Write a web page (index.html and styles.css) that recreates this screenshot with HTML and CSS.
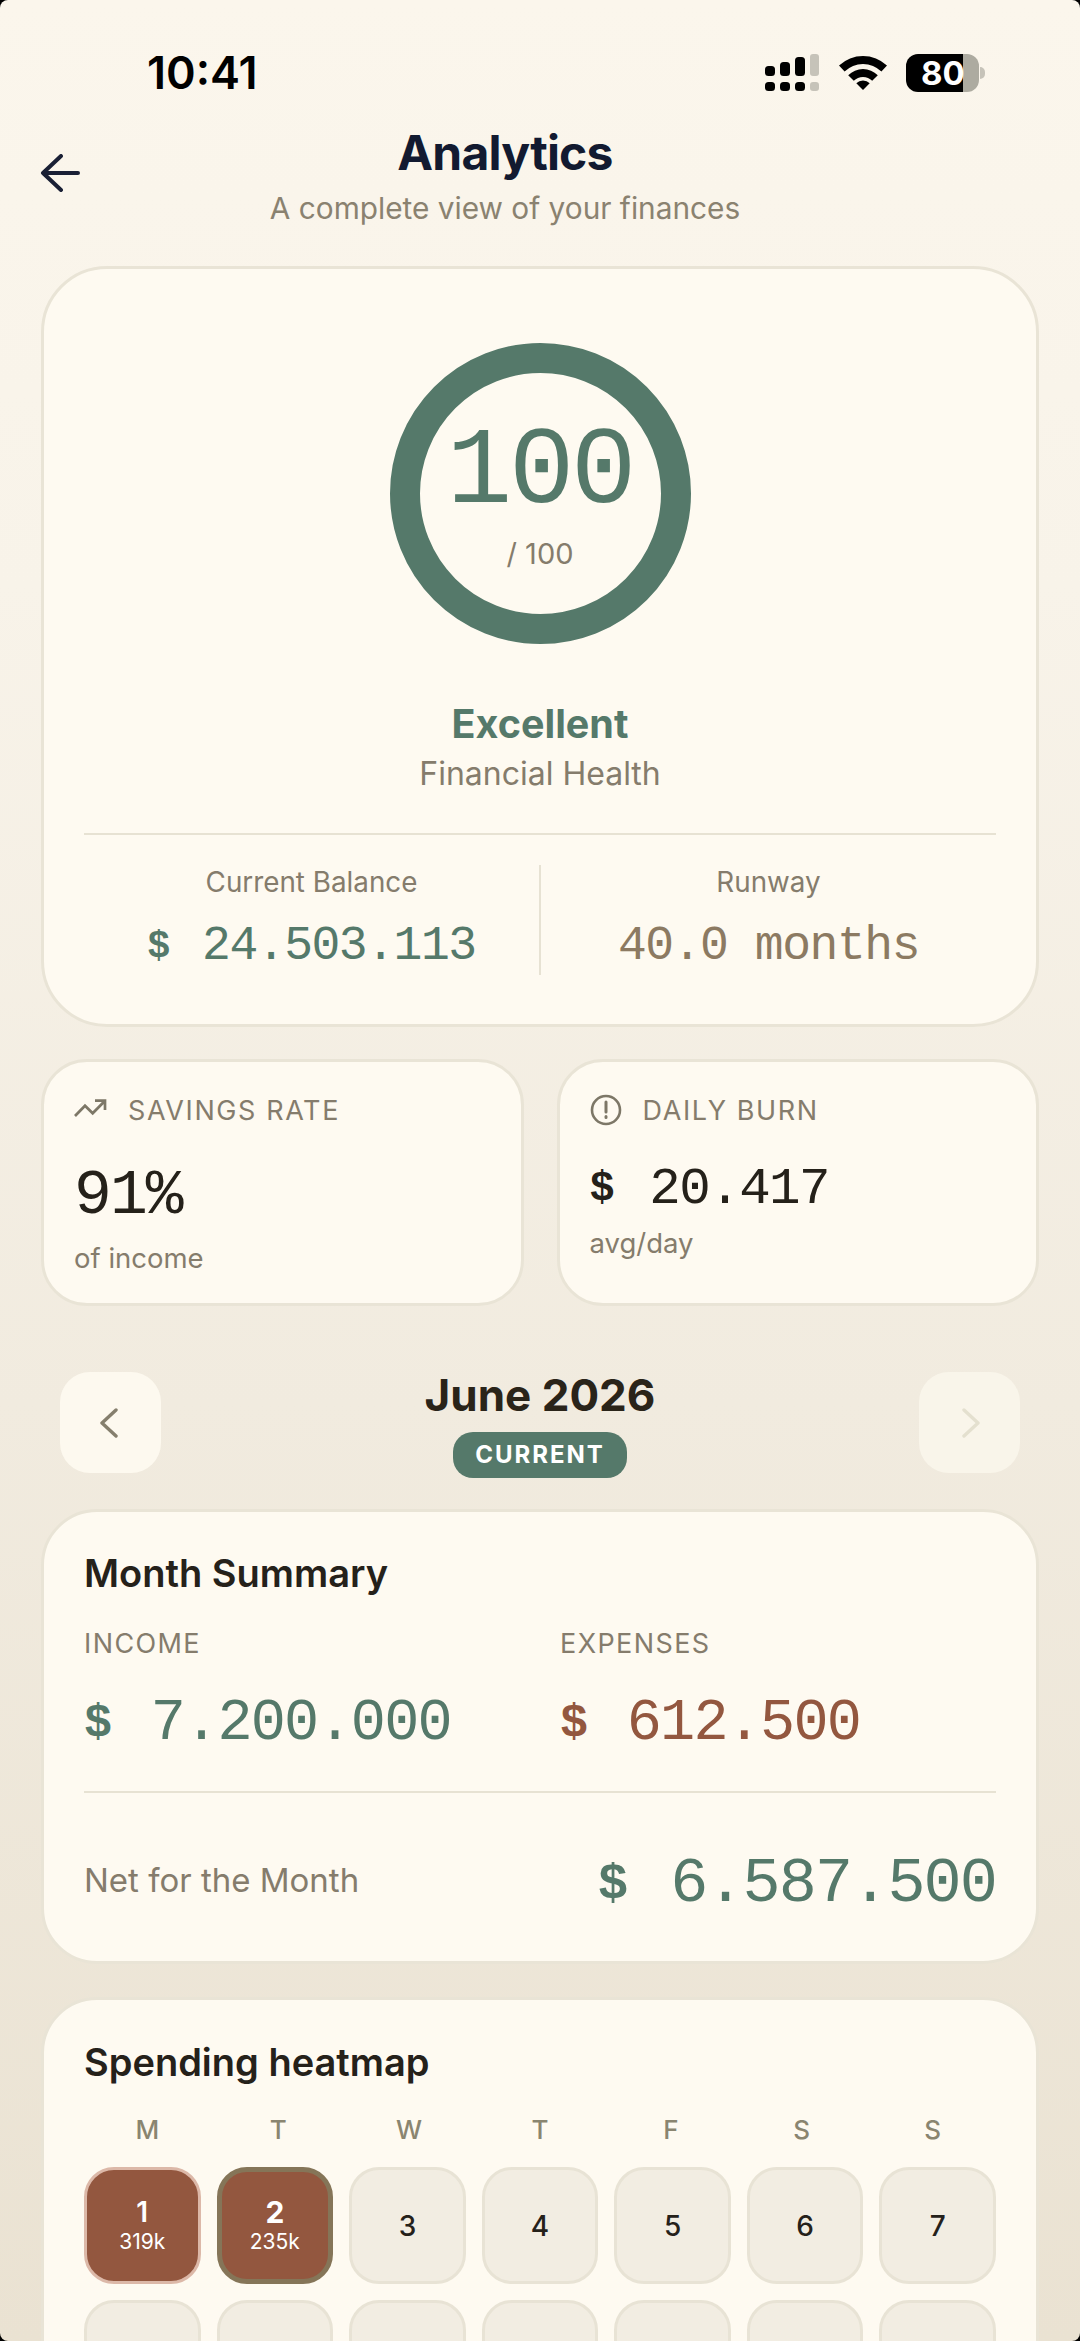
FILE: index.html
```html
<!DOCTYPE html>
<html lang="en">
<head>
    <meta charset="UTF-8">
    <meta name="viewport" content="width=device-width, initial-scale=1.0">
    <link rel="stylesheet" href="styles.css">
    <title>Analytics</title>
</head>
<body>
    <div class="screen">
        <div class="status-bar">
            <span class="time">10:41</span>
            <div class="status-icons">
                <svg class="signal" width="54" height="37" viewBox="0 0 54 37">
                    <g fill="#000">
                        <rect x="0" y="12" width="10" height="10" rx="3.5"/>
                        <rect x="0" y="28" width="10" height="9" rx="3.5"/>
                        <rect x="15" y="8" width="10" height="14" rx="3.5"/>
                        <rect x="15" y="28" width="10" height="9" rx="3.5"/>
                        <rect x="30" y="3" width="10" height="19" rx="3.5"/>
                        <rect x="30" y="28" width="10" height="9" rx="3.5"/>
                    </g>
                    <g fill="#c6c3b9">
                        <rect x="45" y="0" width="9" height="22" rx="3"/>
                        <rect x="45" y="28" width="9" height="9" rx="3"/>
                    </g>
                </svg>
                <svg class="wifi" width="48" height="35" viewBox="0 0 48 35">
                    <path d="M0 10.5A35 35 0 0 1 48 10.5L42.4 16.6A26 26 0 0 0 5.6 16.6Z"/>
                    <path d="M9.2 20.2A21 21 0 0 1 38.8 20.2L33.2 25.8A13 13 0 0 0 14.8 25.8Z"/>
                    <path d="M17.3 28.3A9.5 9.5 0 0 1 30.7 28.3L24 35Z"/>
                </svg>
                <div class="battery">
                    <div class="battery-body"><span class="battery-level">80</span></div>
                    <div class="battery-nub"></div>
                </div>
            </div>
        </div>

        <div class="header">
            <svg class="back" width="40" height="38" viewBox="0 0 40 38">
                <path d="M38 19H3M21 2L3 19l18 17" fill="none" stroke="#1a2035" stroke-width="4" stroke-linecap="round" stroke-linejoin="round"/>
            </svg>
            <div class="header-text">
                <h1>Analytics</h1>
                <p>A complete view of your finances</p>
            </div>
        </div>

        <div class="card health">
            <div class="ring">
                <div class="mono ring-score">100</div>
                <div class="ring-max">/ 100</div>
            </div>
            <div class="health-title">Excellent</div>
            <div class="health-sub">Financial Health</div>
            <div class="health-stats">
                <div class="health-stat">
                    <div class="stat-label">Current Balance</div>
                    <div class="mono green"><span class="cur">$</span> 24.503.113</div>
                </div>
                <div class="health-stat">
                    <div class="stat-label">Runway</div>
                    <div class="mono tan">40.0 months</div>
                </div>
            </div>
        </div>

        <div class="tiles">
            <div class="card tile">
                <div class="tile-label">
                    <svg width="33" height="24" viewBox="0 0 33 24">
                        <path d="M1 18L11 7.7l7.7 7.6L31 2.7M21 2.7h10V12" fill="none" stroke="#7d7767" stroke-width="2.7"/>
                    </svg>
                    <span>SAVINGS RATE</span>
                </div>
                <div class="mono tile-rate">91%</div>
                <div class="tile-note">of income</div>
            </div>
            <div class="card tile">
                <div class="tile-label">
                    <svg width="32" height="32" viewBox="0 0 32 32">
                        <circle cx="16" cy="16" r="14" fill="none" stroke="#7d7767" stroke-width="2.6"/>
                        <path d="M16 8v10M16 22.5v1" fill="none" stroke="#7d7767" stroke-width="3" stroke-linecap="round"/>
                    </svg>
                    <span>DAILY BURN</span>
                </div>
                <div class="mono tile-burn"><span class="cur">$</span> 20.417</div>
                <div class="tile-note tile-note-tight">avg/day</div>
            </div>
        </div>

        <div class="month-nav">
            <div class="nav-btn">
                <svg width="18" height="30" viewBox="0 0 18 30"><path d="M16 2L2 15l14 13" fill="none" stroke="#857f6d" stroke-width="3.4" stroke-linecap="round" stroke-linejoin="round"/></svg>
            </div>
            <div class="month-center">
                <div class="month-name">June 2026</div>
                <div class="month-badge">CURRENT</div>
            </div>
            <div class="nav-btn nav-btn-off">
                <svg width="18" height="30" viewBox="0 0 18 30"><path d="M2 2l14 13L2 28" fill="none" stroke="#e4e0cf" stroke-width="3.4" stroke-linecap="round" stroke-linejoin="round"/></svg>
            </div>
        </div>

        <div class="card summary">
            <h2>Month Summary</h2>
            <div class="summary-cols">
                <div>
                    <div class="summary-label">INCOME</div>
                    <div class="mono summary-value green"><span class="cur">$</span> 7.200.000</div>
                </div>
                <div>
                    <div class="summary-label">EXPENSES</div>
                    <div class="mono summary-value red"><span class="cur">$</span> 612.500</div>
                </div>
            </div>
            <div class="summary-net">
                <span>Net for the Month</span>
                <span class="mono net-value green"><span class="cur">$</span> 6.587.500</span>
            </div>
        </div>

        <div class="card heatmap">
            <h2>Spending heatmap</h2>
            <div class="week-days">
                <span>M</span><span>T</span><span>W</span><span>T</span><span>F</span><span>S</span><span>S</span>
            </div>
            <div class="days">
                <div class="day spent"><b>1</b><small>319k</small></div>
                <div class="day spent today"><b>2</b><small>235k</small></div>
                <div class="day">3</div>
                <div class="day">4</div>
                <div class="day">5</div>
                <div class="day">6</div>
                <div class="day">7</div>
                <div class="day"></div>
                <div class="day"></div>
                <div class="day"></div>
                <div class="day"></div>
                <div class="day"></div>
                <div class="day"></div>
                <div class="day"></div>
            </div>
        </div>
    </div>
</body>
</html>
```

FILE: styles.css
```css
* {
    box-sizing: border-box;
}

html, body {
    margin: 0;
    padding: 0;
    background-color: #000000;
}

body {
    height: 2341px;
    overflow: hidden;
    font-family: 'Inter', 'Noto Sans', sans-serif;
    color: #25211a;
}

.screen {
    height: 2341px;
    overflow: hidden;
    padding: 0 41px;
    border-radius: 8px;
    background: linear-gradient(180deg, #fbf6ec 0%, #f8f3e9 25%, #f1ebdf 60%, #eae2d2 100%);
}

h1, h2, p {
    margin: 0;
}

.mono {
    font-family: 'Liberation Mono', monospace;
    white-space: pre;
    letter-spacing: -0.03em;
}

.cur {
    font-weight: 700;
    font-size: 0.8em;
    margin-right: 0.15em;
    vertical-align: 0.06em;
}

.green { color: #55796a; }
.tan { color: #8c7a62; }
.red { color: #93573f; }

/* status bar */
.status-bar {
    display: flex;
    justify-content: space-between;
    align-items: center;
    height: 39px;
    margin-top: 53px;
    padding: 0 54px 0 106px;
}

.time {
    font-size: 45px;
    font-weight: 600;
    color: #000000;
    line-height: 39px;
}

.status-icons {
    display: flex;
    align-items: center;
    gap: 20px;
}

.wifi {
    margin-right: -1px;
}

.battery {
    display: flex;
    align-items: center;
}

.battery-body {
    width: 73px;
    height: 38px;
    border-radius: 12px;
    background: linear-gradient(90deg, #000000 78%, #adaba0 78%);
    color: #ffffff;
    font-size: 33px;
    font-weight: 700;
    line-height: 38px;
    padding-left: 15px;
}

.battery-nub {
    width: 5px;
    height: 12px;
    margin-left: 1px;
    border-radius: 0 6px 6px 0;
    background-color: #c6c3b9;
}

/* header */
.header {
    display: flex;
    margin-top: 32px;
    height: 102px;
}

.back {
    flex-shrink: 0;
    margin: 30px 0 0 -1px;
}

.header-text {
    flex-grow: 1;
    text-align: center;
    padding-right: 109px;
}

.header-text h1 {
    font-size: 48px;
    font-weight: 700;
    color: #121a30;
    letter-spacing: -0.8px;
    line-height: 58px;
}

.header-text p {
    font-size: 29.8px;
    color: #8a8270;
    line-height: 36px;
    margin-top: 8px;
}

/* cards */
.card {
    background-color: #fefaf1;
    border: 3px solid #e9e4d6;
}

.health {
    margin-top: 40px;
    height: 761px;
    border-radius: 66px;
    padding: 74px 40px 0;
    text-align: center;
}

.ring {
    width: 301px;
    height: 301px;
    margin: 0 auto;
    border: 30px solid #55796a;
    border-radius: 50%;
    display: flex;
    flex-direction: column;
    align-items: center;
}

.ring-score {
    font-size: 109px;
    color: #55796a;
    line-height: 80px;
    margin-top: 60px;
}

.ring-max {
    font-size: 29px;
    color: #857c6c;
    line-height: 36px;
    margin-top: 23px;
}

.health-title {
    font-size: 39.5px;
    font-weight: 700;
    color: #55796a;
    line-height: 48px;
    margin-top: 56px;
}

.health-sub {
    font-size: 32px;
    color: #857c6c;
    line-height: 40px;
    margin-top: 6px;
}

.health-stats {
    display: flex;
    border-top: 2px solid #e7e2d3;
    margin-top: 39px;
    padding-top: 30px;
}

.health-stat {
    flex: 1;
    height: 110px;
}

.health-stat:first-child {
    border-right: 2px solid #e7e2d3;
}

.stat-label {
    font-size: 27.8px;
    color: #857c6c;
    line-height: 34px;
}

.health-stat .mono {
    font-size: 48px;
    line-height: 56px;
    margin-top: 19px;
}

.tiles {
    display: flex;
    gap: 33px;
    margin-top: 32px;
}

.tile {
    flex: 1;
    height: 247px;
    border-radius: 46px;
    padding: 32px 30px 0;
}

.tile-label {
    display: flex;
    align-items: center;
    gap: 21px;
    height: 32px;
    font-size: 27px;
    color: #857c6c;
    letter-spacing: 1.6px;
}

.tile-rate {
    font-size: 63px;
    color: #25211a;
    line-height: 70px;
    margin-top: 36px;
}

.tile-burn {
    font-size: 52.5px;
    color: #25211a;
    line-height: 60px;
    margin-top: 33px;
}

.tile-note {
    font-size: 27.5px;
    color: #857c6c;
    line-height: 34px;
    margin-top: 9px;
}

.tile-note-tight {
    margin-top: 7px;
}

/* month nav */
.month-nav {
    display: flex;
    justify-content: space-between;
    padding: 0 19px;
    margin-top: 66px;
}

.nav-btn {
    display: flex;
    align-items: center;
    justify-content: center;
    width: 101px;
    height: 101px;
    border-radius: 30px;
    background-color: #fdf9ef;
    padding-right: 3px;
}

.nav-btn-off {
    padding: 0 0 0 3px;
    background-color: #f9f5ea;
}

.month-center {
    display: flex;
    flex-direction: column;
    align-items: center;
}

.month-name {
    font-size: 44px;
    font-weight: 700;
    line-height: 46px;
    color: #2a2419;
}

.month-badge {
    margin-top: 14px;
    padding: 0 22px;
    height: 46px;
    border-radius: 20px;
    background-color: #55796a;
    color: #ffffff;
    font-size: 24px;
    font-weight: 700;
    line-height: 46px;
    letter-spacing: 2px;
}

/* summary */
.summary {
    margin-top: 31px;
    height: 455px;
    border-radius: 56px;
    padding: 39px 40px 0;
}

.card h2 {
    font-size: 38px;
    font-weight: 600;
    color: #25211a;
    line-height: 44px;
}

.summary-cols {
    display: grid;
    grid-template-columns: 476px 1fr;
    margin-top: 33px;
    padding-bottom: 34px;
    border-bottom: 2px solid #e7e2d3;
}

.summary-label {
    font-size: 27px;
    color: #857c6c;
    letter-spacing: 1.4px;
    line-height: 32px;
}

.summary-value {
    font-size: 58.5px;
    line-height: 66px;
    margin-top: 31px;
}

.summary-net {
    display: flex;
    justify-content: space-between;
    align-items: center;
    margin-top: 41px;
    font-size: 33px;
    color: #857c6c;
}

.net-value {
    font-size: 63.5px;
    line-height: 80px;
    margin-top: 10px;
}

/* heatmap */
.heatmap {
    margin-top: 33px;
    height: 500px;
    border-radius: 56px;
    padding: 40px 40px 0;
}

.week-days {
    display: grid;
    grid-template-columns: repeat(7, 1fr);
    gap: 4px;
    margin-top: 30px;
    font-size: 26px;
    font-weight: 500;
    color: #8a8570;
    line-height: 32px;
    text-align: center;
}

.days {
    display: grid;
    grid-template-columns: repeat(7, 1fr);
    gap: 16px;
    margin-top: 21px;
}

.day {
    display: flex;
    flex-direction: column;
    align-items: center;
    justify-content: center;
    height: 117px;
    border-radius: 30px;
    border: 3px solid #e8e3d5;
    background-color: #f2ede2;
    font-size: 28px;
    font-weight: 500;
    color: #25211a;
}

.spent {
    background-color: #93573f;
    border-color: #dcb8a8;
    color: #ffffff;
}

.spent b {
    font-size: 28px;
    font-weight: 600;
    line-height: 32px;
}

.spent small {
    font-size: 21px;
    font-weight: 400;
    line-height: 28px;
}

.today {
    border: 5px solid #857558;
}

.today b {
    font-size: 30px;
    font-weight: 700;
}
```
